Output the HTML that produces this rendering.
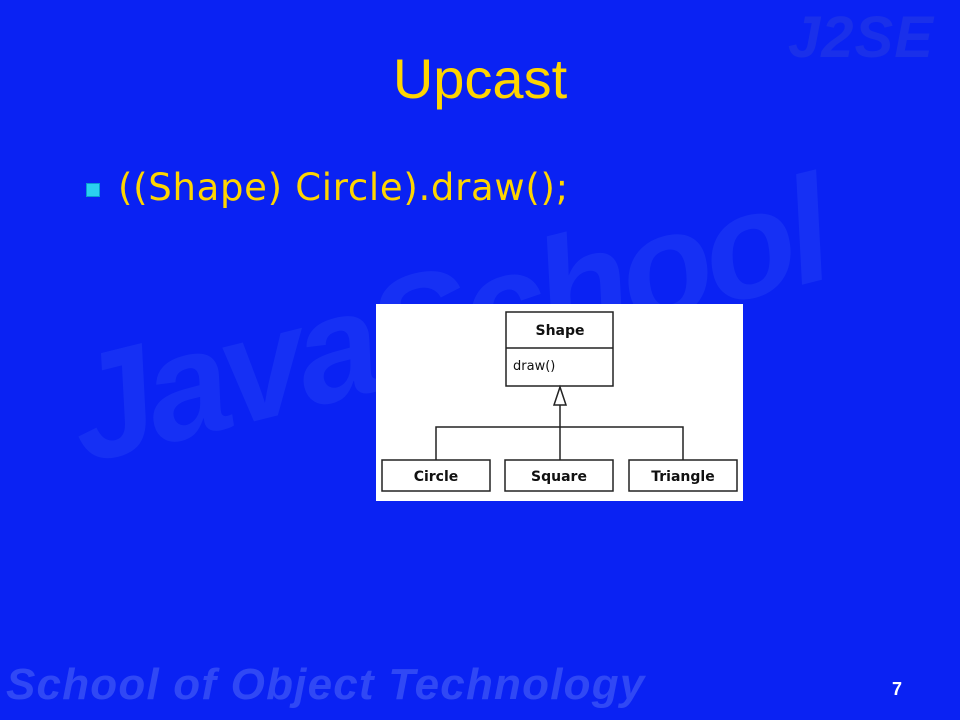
<!DOCTYPE html>
<html><head><style>
body{margin:0;width:960px;height:720px;overflow:hidden;background:#0a22f3;position:relative;font-family:"Liberation Sans",sans-serif}
.wm{position:absolute;font-weight:bold;font-style:italic;white-space:nowrap}
</style></head><body>
<div class="wm" style="left:788px;top:4px;font-size:58px;color:#1a30ea;letter-spacing:1px">J2SE</div>
<div class="wm" style="left:50px;top:330px;font-size:150px;color:#1630f4;transform:rotate(-14deg);transform-origin:left top;letter-spacing:-6px">JavaSchool</div>
<div class="wm" style="left:6px;top:660px;font-size:44px;color:#3048f5;letter-spacing:1.2px">School of Object Technology</div>
<div style="position:absolute;left:0;width:960px;top:46px;text-align:center;color:#ffd500;font-size:56px">Upcast</div>
<div style="position:absolute;left:86px;top:183px;width:12px;height:12px;background:#2ad0f0;border:1px solid #0a9cd0"></div>
<div style="position:absolute;left:118px;top:166px;color:#ffd500;font-size:37px;font-family:'DejaVu Sans',sans-serif;letter-spacing:0.7px;white-space:nowrap">((Shape) Circle).draw();</div>
<svg style="position:absolute;left:376px;top:304px" width="367" height="197" viewBox="376 304 367 197">
<rect x="376" y="304" width="367" height="197" fill="#fff"/>
<g fill="#fff" stroke="#222" stroke-width="1.5">
<rect x="506" y="312" width="107" height="74"/>
<line x1="506" y1="348" x2="613" y2="348"/>
<line x1="560" y1="405" x2="560" y2="460"/>
<polyline fill="none" points="436,460 436,427 683,427 683,460"/>
<polygon points="560,387 554,405 566,405"/>
<rect x="382" y="460" width="108" height="31"/>
<rect x="505" y="460" width="108" height="31"/>
<rect x="629" y="460" width="108" height="31"/>
</g>
<g font-family="DejaVu Sans,sans-serif" font-size="14" fill="#111" text-anchor="middle">
<text x="560" y="335" font-weight="bold">Shape</text>
<text x="436" y="481" font-weight="bold">Circle</text>
<text x="559" y="481" font-weight="bold">Square</text>
<text x="683" y="481" font-weight="bold">Triangle</text>
<text x="513" y="370" text-anchor="start" font-size="13">draw()</text>
</g>
</svg>
<div style="position:absolute;left:892px;top:679px;color:#fff;font-size:18px;font-weight:bold">7</div>
</body></html>
